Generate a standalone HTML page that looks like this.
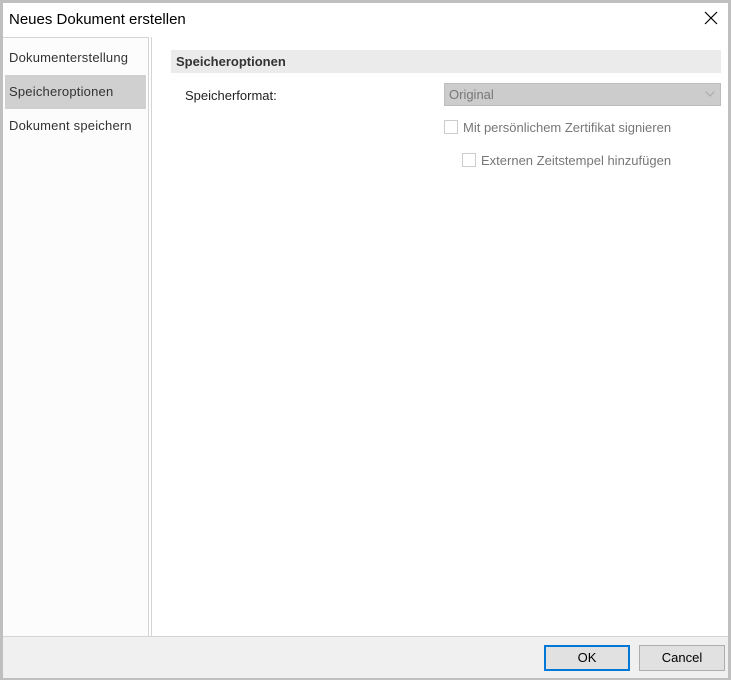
<!DOCTYPE html>
<html><head><style>
body{margin:0;width:731px;height:680px;background:#bfbfbf;position:relative;font-family:"Liberation Sans",sans-serif;overflow:hidden}
.win{position:absolute;left:3px;top:3px;width:725px;height:674px;background:#fff}
.title{position:absolute;left:6px;top:8px;font-size:15px;color:#000}
.x{position:absolute;left:700px;top:7px;width:16px;height:16px}
.left{position:absolute;left:0;top:34px;width:145px;height:598px;border-right:1px solid #d4d4d4;border-top:1px solid #d4d4d4;background:#fcfcfc}
.sep{position:absolute;left:148px;top:34px;width:1px;height:599px;background:#d4d4d4}
.item{position:absolute;left:2px;width:141px;height:34px;font-size:13px;color:#333;line-height:34px;padding-left:4px;box-sizing:border-box;letter-spacing:0.2px}
.sel{background:#d0d0d0}
.hdr{position:absolute;left:168px;top:47px;width:550px;height:23px;background:#ebebeb;font-size:13px;font-weight:bold;color:#333;line-height:23px;padding-left:5px;box-sizing:border-box}
.lbl{position:absolute;font-size:13px;color:#222}
.combo{position:absolute;left:441px;top:80px;width:277px;height:23px;background:#cccccc;border:1px solid #bdbdbd;box-sizing:border-box;font-size:13px;color:#777;line-height:21px;padding-left:4px}
.cb{position:absolute;width:14px;height:14px;border:1px solid #ccc;box-sizing:border-box;background:#fff}
.dis{color:#777}
.foot{position:absolute;left:0;top:633px;width:725px;height:41px;background:#f0f0f0;border-top:1px solid #d4d4d4}
.btn{position:absolute;top:8px;height:26px;background:#e1e1e1;border:1px solid #adadad;box-sizing:border-box;font-size:13px;text-align:center;line-height:24px;color:#000}
</style></head><body>
<div class="win">
<div class="title">Neues Dokument erstellen</div>
<svg class="x" viewBox="0 0 16 16"><path d="M2 2L14 14M14 2L2 14" stroke="#000" stroke-width="1.2"/></svg>
<div class="left">
<div class="item" style="top:3px">Dokumenterstellung</div>
<div class="item sel" style="top:37px">Speicheroptionen</div>
<div class="item" style="top:71px">Dokument speichern</div>
</div>
<div class="sep"></div>
<div class="hdr">Speicheroptionen</div>
<div class="lbl" style="left:182px;top:85px">Speicherformat:</div>
<div class="combo">Original<svg style="position:absolute;right:5px;top:7px" width="10" height="6" viewBox="0 0 10 6"><path d="M0.5 0.5L5 5L9.5 0.5" stroke="#aaa" fill="none"/></svg></div>
<div class="cb" style="left:441px;top:117px"></div>
<div class="lbl dis" style="left:460px;top:117px">Mit persönlichem Zertifikat signieren</div>
<div class="cb" style="left:459px;top:150px"></div>
<div class="lbl dis" style="left:478px;top:150px">Externen Zeitstempel hinzufügen</div>
<div class="foot">
<div class="btn" style="left:541px;width:86px;border:2px solid #0078d7;line-height:22px">OK</div>
<div class="btn" style="left:636px;width:86px">Cancel</div>
</div>
</div>
</body></html>
